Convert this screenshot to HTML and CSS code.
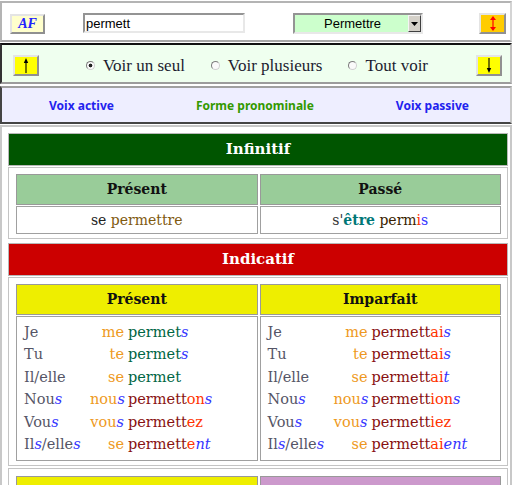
FILE: index.html
```html
<!DOCTYPE html>
<html lang="fr">
<head>
  <meta charset="UTF-8" />
  <meta name="viewport" content="width=device-width, initial-scale=1.0" />
  <title>Conjugaison - se permettre</title>
  <link rel="stylesheet" href="styles.css">
</head>
<body>
  <div class="bar bar-tools">
    <button class="btn btn-af">AF</button>
    <input class="search" type="text" value="permett" />
    <div class="picker">
      <select><option>Permettre</option></select>
      <span class="picker-arrow"><svg width="7" height="4" viewBox="0 0 7 4"><path d="M0 0H7L3.5 4Z" fill="#000"/></svg></span>
    </div>
    <button class="btn btn-swap">
      <svg width="8" height="15" viewBox="0 0 8 15"><path d="M4 3V12" stroke="#f00" stroke-width="1.2"/><path d="M4 0L1 4H7Z M4 15L1 11H7Z" fill="#f00"/></svg>
    </button>
  </div>

  <div class="bar bar-view">
    <button class="btn btn-move">
      <svg width="8" height="15" viewBox="0 0 8 15"><path d="M4 3V15" stroke="#000" stroke-width="1.1"/><path d="M4 0L1.8 5H6.2Z" fill="#000"/></svg>
    </button>
    <label class="opt"><input type="radio" name="view" checked /> Voir un seul</label>
    <label class="opt"><input type="radio" name="view" /> Voir plusieurs</label>
    <label class="opt"><input type="radio" name="view" /> Tout voir</label>
    <button class="btn btn-move btn-down">
      <svg width="8" height="15" viewBox="0 0 8 15"><path d="M4 0V12" stroke="#000" stroke-width="1.1"/><path d="M4 15L1.8 10H6.2Z" fill="#000"/></svg>
    </button>
  </div>

  <div class="bar bar-voice">
    <a href="#" class="voice">Voix active</a>
    <a href="#" class="voice voice-current">Forme pronominale</a>
    <a href="#" class="voice">Voix passive</a>
  </div>

  <div class="content">
    <div class="mode mode-inf">Infinitif</div>
    <div class="tenses">
      <div class="tense">
        <div class="tense-head head-green">Présent</div>
        <div class="tense-body inf-body">se <span class="inf-stem">permettre</span></div>
      </div>
      <div class="tense">
        <div class="tense-head head-green">Passé</div>
        <div class="tense-body inf-body"><span class="inf-pre">s'</span><span class="aux">être</span> <span class="part">perm</span><span class="term">i</span><span class="mark">s</span></div>
      </div>
    </div>

    <div class="mode mode-ind">Indicatif</div>
    <div class="tenses">
      <div class="tense">
        <div class="tense-head head-yellow">Présent</div>
        <div class="tense-body conj">
          <span class="pron">Je</span><span class="refl">me</span><span><span class="stem-pres">permet</span><i class="mark">s</i></span>
          <span class="pron">Tu</span><span class="refl">te</span><span><span class="stem-pres">permet</span><i class="mark">s</i></span>
          <span class="pron">Il/elle</span><span class="refl">se</span><span><span class="stem-pres">permet</span></span>
          <span class="pron">Nou<i class="mark">s</i></span><span class="refl">nou<i class="mark">s</i></span><span><span class="stem">permett</span><span class="term">on</span><i class="mark">s</i></span>
          <span class="pron">Vou<i class="mark">s</i></span><span class="refl">vou<i class="mark">s</i></span><span><span class="stem">permett</span><span class="term">ez</span></span>
          <span class="pron">Il<i class="mark">s</i>/elle<i class="mark">s</i></span><span class="refl">se</span><span><span class="stem">permett</span><span class="term">e</span><i class="mark">nt</i></span>
        </div>
      </div>
      <div class="tense">
        <div class="tense-head head-yellow">Imparfait</div>
        <div class="tense-body conj">
          <span class="pron">Je</span><span class="refl">me</span><span><span class="stem">permett</span><span class="term">ai</span><i class="mark">s</i></span>
          <span class="pron">Tu</span><span class="refl">te</span><span><span class="stem">permett</span><span class="term">ai</span><i class="mark">s</i></span>
          <span class="pron">Il/elle</span><span class="refl">se</span><span><span class="stem">permett</span><span class="term">ai</span><i class="mark">t</i></span>
          <span class="pron">Nou<i class="mark">s</i></span><span class="refl">nou<i class="mark">s</i></span><span><span class="stem">permett</span><span class="term">ion</span><i class="mark">s</i></span>
          <span class="pron">Vou<i class="mark">s</i></span><span class="refl">vou<i class="mark">s</i></span><span><span class="stem">permett</span><span class="term">iez</span></span>
          <span class="pron">Il<i class="mark">s</i>/elle<i class="mark">s</i></span><span class="refl">se</span><span><span class="stem">permett</span><span class="term">ai</span><i class="mark">ent</i></span>
        </div>
      </div>
    </div>

    <div class="tenses tenses-next">
      <div class="tense">
        <div class="tense-head head-yellow"></div>
      </div>
      <div class="tense">
        <div class="tense-head head-purple"></div>
      </div>
    </div>
  </div>
</body>
</html>
```

FILE: styles.css
```css
html, body { overflow: hidden; }
body { margin: 0; padding-top: 1px; font-family: "Liberation Serif", serif; background: #fff; }

.bar { display: flex; align-items: center; border: 2px solid; }
.btn { display: flex; align-items: center; justify-content: center; padding: 0; border: 2px outset #e4e4e4; cursor: pointer; }

.bar-tools { height: 27px; padding: 10px 3px 0 8px; align-items: flex-start; background: #fff; border-color: #b4b4b4 #d4d4d4 #a8a8a8 #b4b4b4; }
.btn-af { width: 35px; height: 20px; margin-top: 1px; background: #ffffcc; color: #2323ff; font: italic bold 14px "Liberation Serif", serif; }
.search { width: 162px; height: 20px; margin-left: 38px; box-sizing: border-box; padding: 0 1px; border: 2px inset #e8e8e8; font: 13px "Liberation Sans", Arial, sans-serif; color: #000; }
.picker { position: relative; width: 130px; height: 21px; margin-left: 48px; }
.picker select { appearance: none; -webkit-appearance: none; width: 100%; height: 100%; box-sizing: border-box; margin: 0; padding: 0 0 0 29px; border: 2px inset #e8e8e8; border-radius: 0; background: #ccffcc; font: 13px "Liberation Sans", Arial, sans-serif; color: #000; }
.picker-arrow { position: absolute; top: 2px; right: 2px; width: 13px; height: 17px; box-sizing: border-box; display: flex; align-items: center; justify-content: center; background: #d4d0c8; border: 1px solid; border-color: #f4f4f4 #404040 #404040 #f4f4f4; }
.btn-swap { width: 27px; height: 21px; margin-left: 56px; background: #ffcc00; }

.bar-view { height: 21px; margin-top: 1px; padding: 10px 8px 6px 11px; background: #efffef; border-color: #111 #c0c0c0 #9c9c9c #333; }
.btn-move { width: 26px; height: 21px; background: #ffff00; }
.btn-down { margin-left: auto; }
.opt { display: flex; align-items: center; margin-left: 26px; font-size: 17px; color: #1c1c30; }
.btn-move + .opt { margin-left: 47px; }
.opt input { appearance: none; -webkit-appearance: none; width: 9px; height: 9px; margin: 0 8px 0 0; border: 1px solid; border-color: #7c7c7c #d0d0d0 #d0d0d0 #7c7c7c; border-radius: 50%; background: #fafafa; }
.opt input:checked { background: radial-gradient(circle, #222 0 1.6px, #fafafa 2.2px); }

.bar-voice { height: 34px; margin-top: 2px; padding: 0 41px 0 47px; justify-content: space-between; background: #eeeeff; border-color: #a0a0a0 #c8c8c8 #444 #444; }
.voice { font: bold 12px "Noto Sans", sans-serif; color: #2222ee; text-decoration: none; }
.voice-current { color: #339900; }

.content { margin-top: 1px; padding: 6px 2px 0 6px; border: 2px solid #c8c8c8; font-family: "DejaVu Serif", serif; }
.mode { height: 31px; line-height: 31px; border: 1px solid #b8b8b8; text-align: center; color: #fff; font-size: 15px; font-weight: bold; }
.mode-inf { background: #005500; }
.mode-ind { margin-top: 4px; background: #cc0000; }

.tenses { display: grid; grid-template-columns: 1fr 1fr; column-gap: 2px; margin-top: 1px; padding: 6px 6px 4px 7px; border: 1px solid #c4c4c4; }
.tenses-next { margin-top: 2px; padding-top: 7px; }
.tense { display: flex; flex-direction: column; gap: 1px; }
.tense-head { height: 29px; line-height: 29px; border: 1px solid #999; text-align: center; font-size: 14px; font-weight: bold; color: #111; }
.head-green { background: #99cc99; }
.head-yellow { background: #eeee00; }
.head-purple { background: #cc99cc; }
.tense-body { border: 1px solid #a0a0a0; background: #fff; }

.inf-body { height: 26px; line-height: 26px; text-align: center; font-size: 14px; color: #222; }
.inf-stem { color: #805a10; }
.inf-pre { color: #333; }
.aux { color: #007777; font-weight: bold; }
.part { color: #3a1e00; }

.conj { display: grid; grid-template-columns: 66px 38px 1fr; padding: 4px 0 5px 7px; font-size: 14.5px; line-height: 22.4px; }
.pron { color: #555566; }
.refl { padding-right: 4px; text-align: right; color: #ee9922; }
.stem-pres { color: #006644; }
.stem { color: #881111; }
.term { color: #ff3300; }
.mark { color: #3333ff; }
span.mark { font-style: normal; }
```
